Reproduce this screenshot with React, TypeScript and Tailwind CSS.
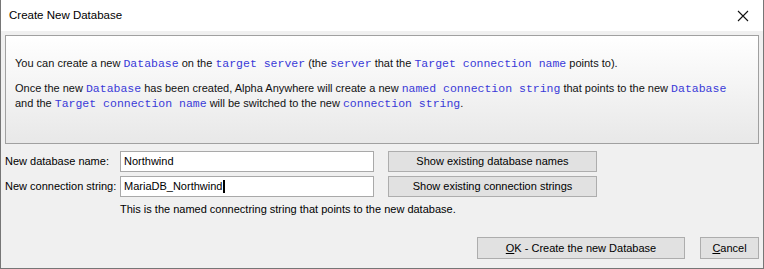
import React from "react";

const code = "font-['Liberation_Mono','Courier_New',monospace] text-[11.5px] text-[#3a3ad8]";

function C({ children }: { children: React.ReactNode }) {
  return <span className={code}>{children}</span>;
}

export default function App() {
  return (
    <div className="w-[764px] h-[269px] flex flex-col bg-[#f0f0f0] border-x border-b border-[#767676] font-['Liberation_Sans',Arial,sans-serif] text-[11px] text-black overflow-hidden">
      {/* Title bar */}
      <div className="h-[31px] shrink-0 bg-white flex items-center justify-between pl-[8px] pr-[10px]">
        <span className="text-[11.5px] text-black">Create New Database</span>
        <svg width="12" height="12" viewBox="0 0 12 12" className="mr-[4px]">
          <path d="M1 1 L11 11 M11 1 L1 11" stroke="#111" strokeWidth="1.1" fill="none" />
        </svg>
      </div>

      {/* Body */}
      <div className="flex flex-col flex-1 px-[4px]">
        {/* Info panel */}
        <div className="mt-[4px] h-[109px] border border-[#a0a0a0] bg-gradient-to-b from-[#ffffff] to-[#e8e8e8] pl-[9px] pt-[20px] leading-[14px] text-[#111]">
          <p>
            You can create a new <C>Database</C> on the <C>target server</C> (the <C>server</C> that the{" "}
            <C>Target connection name</C> points to).
          </p>
          <p className="mt-[10px]">
            Once the new <C>Database</C> has been created, Alpha Anywhere will create a new{" "}
            <C>named connection string</C> that points to the new <C>Database</C>
          </p>
          <p>
            and the <C>Target connection name</C> will be switched to the new <C>connection string</C>.
          </p>
        </div>

        {/* Form rows */}
        <div className="mt-[7px] flex flex-col gap-[4px]">
          <div className="flex items-center h-[21px]">
            <span className="w-[115px] shrink-0">New database name:</span>
            <div className="w-[254px] h-[21px] bg-white border border-[#a9a9a9] flex items-center px-[3px]">
              Northwind
            </div>
            <button className="ml-[14px] w-[209px] h-[21px] bg-[#e1e1e1] border border-[#adadad] flex items-center justify-center">
              Show existing database names
            </button>
          </div>
          <div className="flex items-center h-[21px]">
            <span className="w-[115px] shrink-0">New connection string:</span>
            <div className="w-[254px] h-[21px] bg-white border border-[#a9a9a9] flex items-center px-[3px]">
              MariaDB_Northwind
              <span className="inline-block w-[2px] h-[13px] bg-black ml-[1px]" />
            </div>
            <button className="ml-[14px] w-[209px] h-[21px] bg-[#e1e1e1] border border-[#adadad] flex items-center justify-center">
              Show existing connection strings
            </button>
          </div>
        </div>

        <div className="mt-[5px] pl-[115px] leading-[14px]">
          This is the named connectring string that points to the new database.
        </div>

        {/* Bottom buttons */}
        <div className="mt-[21px] flex justify-end gap-[15px]">
          <button className="w-[208px] h-[22px] bg-[#e1e1e1] border border-[#adadad] flex items-center justify-center">
            <span>
              <span className="underline">O</span>K - Create the new Database
            </span>
          </button>
          <button className="w-[59px] h-[22px] bg-[#e1e1e1] border border-[#adadad] flex items-center justify-center">
            <span>
              <span className="underline">C</span>ancel
            </span>
          </button>
        </div>
      </div>
    </div>
  );
}
